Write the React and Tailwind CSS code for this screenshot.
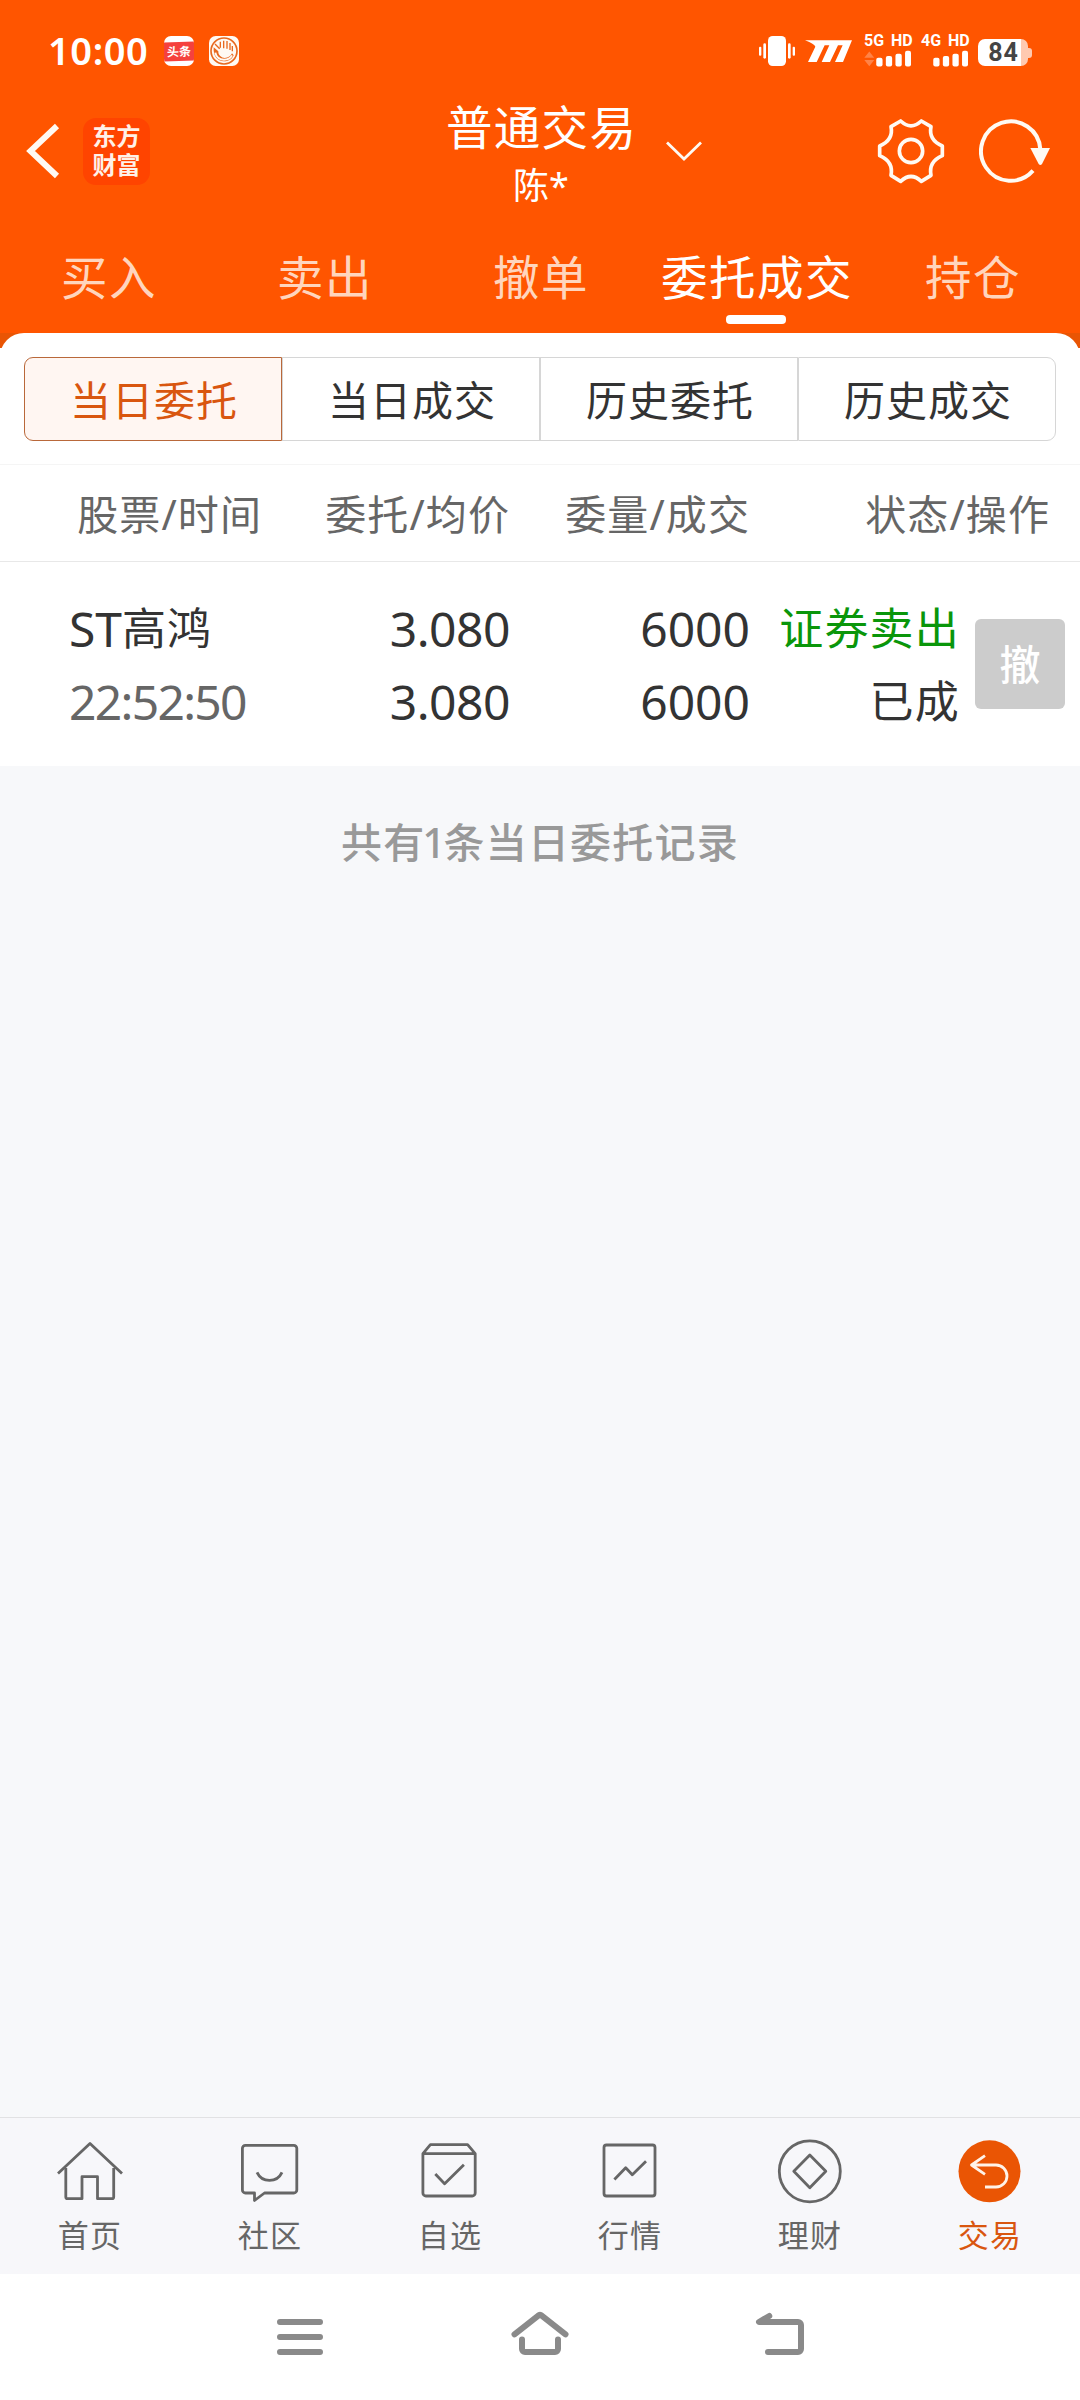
import React, { useState } from "react";

const tradeTabs = ["买入", "卖出", "撤单", "委托成交", "持仓"];
const segments = ["当日委托", "当日成交", "历史委托", "历史成交"];

const orders = [
  {
    prefix: "ST",
    name: "高鸿",
    time: "22:52:50",
    price: "3.080",
    avgPrice: "3.080",
    amount: "6000",
    filled: "6000",
    side: "证券卖出",
    status: "已成",
  },
];

const HomeIcon = () => (
  <>
    <path d="M3 37.5 35 7.5 67 37.5" />
    <path d="M10.8 32V61a1.7 1.7 0 0 0 1.7 1.7H27V40.7H42.5V62.7H57a1.7 1.7 0 0 0 1.7-1.7V32" />
  </>
);

const CommunityIcon = () => (
  <>
    <path d="M10.4 9.3H58.8a3 3 0 0 1 3 3V54a3 3 0 0 1-3 3H29.5L19.5 64.5V57H10.4a3 3 0 0 1-3-3V12.3a3 3 0 0 1 3-3Z" />
    <path d="M22 36.3C27 47 42 47 47 36.3" />
  </>
);

const WatchIcon = () => (
  <>
    <path d="M7.9 17.7 15.4 8.7H52.6L60.2 17.7V57a3 3 0 0 1-3 3H10.9a3 3 0 0 1-3-3ZM7.9 17.7H60.2" />
    <path d="M20.3 38 29.6 47.7 48.9 28.7" />
  </>
);

const MarketIcon = () => (
  <>
    <rect x="9" y="9" width="51" height="51" rx="2.5" />
    <path d="M19.4 43.5 30.7 31.7 37.3 38.7 51 25.3" />
  </>
);

const FinanceIcon = () => (
  <>
    <circle cx="34.8" cy="35.3" r="30.5" />
    <path d="M34.8 19 50.8 35.3 34.8 51.8 18.8 35.3Z" />
  </>
);

const TradeIcon = () => (
  <>
    <circle cx="34.5" cy="35.3" r="31" fill="#ea5504" stroke="none" />
    <path stroke="#fff3e8" d="M30 19.7 16.5 29 30 38.3M17 29H41a11 11 0 0 1 0 22H30" />
  </>
);

const navItems = [
  { label: "首页", Icon: HomeIcon },
  { label: "社区", Icon: CommunityIcon },
  { label: "自选", Icon: WatchIcon },
  { label: "行情", Icon: MarketIcon },
  { label: "理财", Icon: FinanceIcon },
  { label: "交易", Icon: TradeIcon },
];

const Signal = ({ label, arrows }) => (
  <div className="mt-[31px] w-[47px] self-start">
    <div className="h-[19px] font-[Roboto] text-[16px] leading-[19px] font-bold [word-spacing:3px] whitespace-nowrap">
      {label}
    </div>
    <svg className="h-[17px] w-[47px]" viewBox="431 151 142 51" fill="#fff">
      {arrows && (
        <path fill="#ff8347" d="M447 155 462 174H432ZM447 200 462 181H432Z" />
      )}
      <rect x="468" y="174" width="19" height="27" rx="6" />
      <rect x="497" y="169" width="19" height="32" rx="6" />
      <rect x="526" y="162" width="19" height="39" rx="6" />
      <rect x="555" y="153" width="18" height="48" rx="6" />
    </svg>
  </div>
);

const StatusBar = () => (
  <div className="flex h-[99px] items-center pr-[48px] pl-[48px] text-white">
    <div className="w-[116px] text-[38px] leading-[50px] font-semibold tracking-[0.6px]">
      10:00
    </div>
    <div className="mt-[3px] flex h-[30px] w-[30px] items-center overflow-hidden rounded-[7px] bg-white">
      <div className="flex h-[19px] w-[30px] -skew-y-2 items-center justify-center bg-[#f5413d] text-[12px] leading-none font-bold">
        头条
      </div>
    </div>
    <svg className="mt-[3px] ml-[15px] h-[30px] w-[30px]" viewBox="0 0 90 90" fill="none">
      <rect width="90" height="90" rx="20" fill="#fffaf3" />
      <circle cx="45" cy="45" r="39" stroke="#e8691f" strokeWidth="5" />
      <path
        d="M14 34 28 46C27 58 38 66 47 66 58 66 66 60 69 52L74 58C68 72 56 76 45 76 25 76 12 60 14 34Z"
        fill="#e8691f"
      />
      <path d="M19 50C21 64 33 71 45 71 56 71 65 66 69 58" stroke="#fffaf3" strokeWidth="6" />
      <path d="M18 24 32 38M34 17V35M44 14V37M54 15V38M63 21V42M70 30V46" stroke="#e8691f" strokeWidth="4" />
    </svg>

    <svg className="mt-[3px] ml-auto h-[30px] w-[36px]" viewBox="0 0 108 90" fill="#fff">
      <rect x="27" width="54" height="90" rx="14" />
      <rect y="32" width="7" height="27" rx="3" />
      <rect x="13" y="22" width="8" height="46" rx="4" />
      <rect x="87" y="22" width="8" height="46" rx="4" />
      <rect x="101" y="32" width="7" height="27" rx="3" />
    </svg>
    <svg className="mt-[3px] mr-[12px] ml-[10px] h-[22px] w-[47px]" viewBox="255 120 141 66" fill="#fff">
      <path d="M255 121H396L369 186H345L368 136H354L330 186H305L328 136H314L290 186H264L286 140Q284 132 255 121Z" />
    </svg>
    <Signal label="5G HD" arrows />
    <div className="w-[10px]" />
    <Signal label="4G HD" />
    <div className="mt-[6px] ml-[10px] flex items-center">
      <div className="flex h-[27px] w-[50px] items-center justify-center rounded-[7px] bg-linear-to-r from-white from-86% to-[#ffc9b0] to-86% pl-px font-[Roboto] text-[25px] leading-[27px] font-bold tracking-[0.8px] text-[#444]">
        84
      </div>
      <div className="h-[10px] w-[4px] rounded-r-[3px] bg-[#ffc9b0]" />
    </div>
  </div>
);

const TitleBar = () => (
  <div className="grid h-[115px] grid-cols-[1fr_192px_1fr] text-white">
    <div className="flex h-[104px] items-center pl-[25px]">
      <svg className="h-[58px] w-[36px]" viewBox="0 0 36 58" fill="none" stroke="#fffaf3" strokeWidth="6">
        <path d="M32 4 5.5 29 32 54" />
      </svg>
      <div className="ml-[22px] flex h-[67px] w-[67px] flex-col items-center justify-center rounded-[13px] bg-[#ff4400] pb-[2px] text-[24px] leading-[29px] font-bold text-[#fff1e8]">
        <span>东方</span>
        <span>财富</span>
      </div>
    </div>
    <div className="text-center">
      <div className="pl-[2px] text-[46.5px] leading-[56px] tracking-[1.3px] whitespace-nowrap">
        普通交易
      </div>
      <div className="mt-[2px] pl-[2px] text-[36px] leading-[57px]">陈*</div>
    </div>
    <div className="flex h-[104px] items-center pr-[29px]">
      <svg className="ml-[30px] h-[20px] w-[36px]" viewBox="0 0 36 20" fill="none" stroke="#fffaf3" strokeWidth="2.8">
        <path d="M1 1.5 18 18 35 1.5" />
      </svg>
      <svg className="ml-auto h-[70px] w-[70px]" viewBox="467 348 210 210" fill="none" stroke="#fffaf3" strokeWidth="11" strokeLinejoin="round">
        <path d="M512 380 541 363Q572 392 603 363L632 380Q624 420 666 438V467Q624 485 632 526L603 544Q572 515 541 544L512 526Q520 485 478 467V438Q520 420 512 380Z" />
        <circle cx="572" cy="453" r="35" />
      </svg>
      <svg className="ml-[33px] h-[70px] w-[72px]" viewBox="777 348 216 210" fill="none" stroke="#fffaf3" strokeWidth="12">
        <path d="M961 448A89 89 0 1 0 939 512" />
        <path d="M931 444H990L966 492Q961 498 956 492Z" fill="#fffaf3" stroke="none" />
      </svg>
    </div>
  </div>
);

const App = () => {
  const [activeTab, setActiveTab] = useState("委托成交");
  const [activeSegment, setActiveSegment] = useState("当日委托");
  const [activeNav, setActiveNav] = useState("交易");

  return (
    <div className="flex h-[2400px] w-[1080px] flex-col overflow-hidden bg-[#f7f8fa] font-['Noto_Sans','Noto_Sans_CJK_SC',sans-serif] text-[#333]">
      <header className="bg-[#ff5500]">
        <StatusBar />
        <TitleBar />
        <div className="grid h-[119px] grid-cols-5 pt-[33px]">
          {tradeTabs.map((tab) => (
            <button
              key={tab}
              onClick={() => setActiveTab(tab)}
              className="flex flex-col items-center"
            >
              <span
                className={`pl-[2px] text-[46.5px] leading-[60px] tracking-[1.5px] whitespace-nowrap ${
                  tab === activeTab ? "text-white" : "text-[#ffd5bd]"
                }`}
              >
                {tab}
              </span>
              {tab === activeTab && (
                <span className="mt-[8px] h-[9px] w-[60px] rounded-[4px] bg-white" />
              )}
            </button>
          ))}
        </div>
      </header>

      {/* rounded top edge of the sheet */}
      <div className="h-[15px] overflow-hidden bg-[#e95504]">
        <div className="h-[48px] rounded-t-[24px] bg-white" />
      </div>

      <div className="h-[117px] border-b border-[#f5f5f5] bg-white px-[24px] pt-[9px]">
        <div className="grid h-[84px] grid-cols-4">
          {segments.map((item) => (
            <button
              key={item}
              onClick={() => setActiveSegment(item)}
              className={`border pt-[2px] pl-[2px] text-[41px] leading-[80px] tracking-[1px] first:rounded-l-[9px] last:rounded-r-[9px] ${
                item === activeSegment
                  ? "border-[#b9683a] bg-[#fff6f2] text-[#d9560f]"
                  : "border-[#d6d6d6]"
              }`}
            >
              {item}
            </button>
          ))}
        </div>
      </div>

      <div className="grid h-[97px] grid-cols-[269px_241px_240px_300px] border-b border-[#e8e8e8] bg-white pt-[2px] text-right text-[41px] leading-[94px] tracking-[1.1px] text-[#666]">
        <span className="pr-[7px]">股票/时间</span>
        <span>委托/均价</span>
        <span>委量/成交</span>
        <span>状态/操作</span>
      </div>

      {orders.map((order) => (
        <div
          key={order.time}
          className="flex h-[204px] bg-white pt-[30px] text-right text-[48px] leading-[73px]"
        >
          <div className="w-[269px] pl-[69px] text-left">
            <div className="flex">
              {order.prefix}
              <span className="text-[44px] tracking-[1px]">{order.name}</span>
            </div>
            <div className="tracking-[-1.7px] text-[#666]">{order.time}</div>
          </div>
          <div className="w-[241px] tracking-[-0.5px]">
            <div>{order.price}</div>
            <div>{order.avgPrice}</div>
          </div>
          <div className="w-[240px]">
            <div>{order.amount}</div>
            <div>{order.filled}</div>
          </div>
          <div className="w-[210px] text-[44px] tracking-[1.2px]">
            <div className="whitespace-nowrap text-[#0a960a]">{order.side}</div>
            <div>{order.status}</div>
          </div>
          <button className="mt-[27px] ml-[15px] h-[90px] w-[90px] rounded-[6px] bg-[#ccc] text-[41px] leading-[90px] font-medium text-white">
            撤
          </button>
        </div>
      ))}

      <div className="flex flex-1 justify-center pt-[46px] text-[41px] leading-[60px] font-medium tracking-[1.2px] text-[#999]">
        共有
        <span className="flex w-[18px] justify-center">{orders.length}</span>
        条当日委托记录
      </div>

      <nav className="grid h-[157px] grid-cols-6 border-t border-[#e2e2e4] bg-[#f7f7fa] pt-[18px]">
        {navItems.map(({ label, Icon }) => (
          <button
            key={label}
            onClick={() => setActiveNav(label)}
            className={`flex flex-col items-center ${
              label === activeNav ? "text-[#d9560f]" : "text-[#666]"
            }`}
          >
            <svg
              className="h-[70px] w-[70px]"
              viewBox="0 0 70 70"
              fill="none"
              stroke="currentColor"
              strokeWidth="2.8"
              strokeLinejoin="round"
            >
              <Icon />
            </svg>
            <span className="mt-[9px] text-[31px] leading-[40px] tracking-[1.2px]">{label}</span>
          </button>
        ))}
      </nav>

      {/* system navigation keys */}
      <div className="grid h-[126px] grid-cols-3 place-items-center bg-white px-[180px] text-[#8a8a8a]">
        <svg className="h-[60px] w-[60px]" viewBox="0 0 60 60" fill="none" stroke="currentColor" strokeWidth="6" strokeLinecap="round">
          <path d="M10 15H50M10 30H50M10 45H50" />
        </svg>
        <svg className="h-[60px] w-[60px]" viewBox="0 0 60 60" fill="none" stroke="currentColor" strokeWidth="6" strokeLinecap="round" strokeLinejoin="round">
          <path d="M4.5 27.3 28 8.8Q30 7 32 8.8L55.5 27.3M12 32.5V42a3 3 0 0 0 3 3H45a3 3 0 0 0 3-3V32.5" />
        </svg>
        <svg className="h-[60px] w-[60px]" viewBox="0 0 60 60" fill="none" stroke="currentColor" strokeWidth="6" strokeLinecap="round" strokeLinejoin="round">
          <path d="M19.3 9 9 15H48a3 3 0 0 1 3 3V42a3 3 0 0 1-3 3H18" />
        </svg>
      </div>
    </div>
  );
};

export default App;
